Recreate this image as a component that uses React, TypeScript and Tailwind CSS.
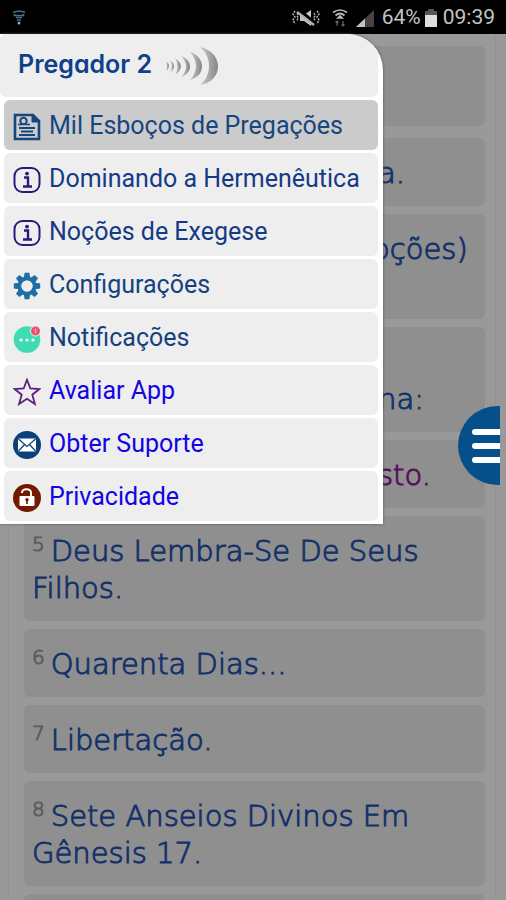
import React from "react";

const titleFont = "font-['Inter','Liberation_Sans',sans-serif]";
const menuFont = "font-['Roboto','Liberation_Sans',sans-serif]";
const iconBox = "mt-0.5 size-7 shrink-0";

function DocIcon() {
  return (
    <svg viewBox="0 0 28 28" className={iconBox} fill="none" stroke="#15467c" aria-hidden="true">
      <path d="M2 2h18l6 6v18H2z" strokeWidth="2.6" />
      <path d="M19 1v8h8z" fill="#15467c" strokeWidth="1" />
      <circle cx="10.500" cy="8" r="3.200" strokeWidth="2" />
      <path d="M5 11.500h4M12 11.500h5" strokeWidth="1.500" />
      <path d="M6 15h16M8 18.500h12M6 22h16" strokeWidth="1.800" />
    </svg>
  );
}

function InfoIcon() {
  return (
    <svg viewBox="0 0 28 28" className={iconBox} fill="none" stroke="#2a1a7e" aria-hidden="true">
      <rect x="1.500" y="2" width="25" height="24" rx="8" strokeWidth="2" />
      <path d="M11 11.500h4v9M10 20.500h9" strokeWidth="2.400" />
      <circle cx="14" cy="7.600" r="1.900" fill="#2a1a7e" stroke="none" />
    </svg>
  );
}

function GearIcon() {
  return (
    <svg viewBox="0 0 28 28" className={iconBox} aria-hidden="true">
      <g fill="#1d6fa5">
        {[0, 45, 90, 135].map((a) => (
          <path key={a} d="M11.600 .800h4.800l.8 5h-6.400zM11.600 27.200h4.800l.8-5h-6.400z" transform={`rotate(${a} 14 14)`} />
        ))}
      </g>
      <circle cx="14" cy="14" r="7.500" fill="none" stroke="#1d6fa5" strokeWidth="4" />
      <circle cx="14" cy="14" r="5.600" fill="#eee" />
    </svg>
  );
}

function ChatIcon() {
  return (
    <svg viewBox="0 0 28 28" className={iconBox} aria-hidden="true">
      <circle cx="14" cy="14.500" r="13.300" fill="#3fdcb4" />
      <g fill="#fff">
        <circle cx="8" cy="15" r="1.600" />
        <circle cx="14" cy="15" r="1.600" />
        <circle cx="20" cy="15" r="1.600" />
      </g>
      <circle cx="22.500" cy="6" r="5" fill="#ee4f6c" stroke="#eee" strokeWidth="1" />
      <path d="M21.500 5l1.200-1v4.500" fill="none" stroke="#fbb" strokeWidth="1" />
    </svg>
  );
}

function StarIcon() {
  return (
    <svg viewBox="0 0 28 28" className={iconBox} fill="none" stroke="#5b1f80" strokeWidth="1.800" aria-hidden="true">
      <path d="M14 1.800l3.300 8.700 9.200.500-7.200 5.700 2.600 9.300L14 20.800 6.100 26l2.600-9.300L1.500 11l9.200-.500z" />
    </svg>
  );
}

function MailIcon() {
  return (
    <svg viewBox="0 0 28 28" className={iconBox} aria-hidden="true">
      <circle cx="14" cy="14" r="14" fill="#0b4079" />
      <rect x="5" y="7.500" width="18" height="13" rx="1" fill="#fff" />
      <path d="M5.500 8l8.500 7.500L22.500 8M5.500 20l6-6.500M22.500 20l-6-6.500" fill="none" stroke="#0b4079" strokeWidth="1.200" />
    </svg>
  );
}

function LockIcon() {
  return (
    <svg viewBox="0 0 28 28" className={iconBox} aria-hidden="true">
      <circle cx="14" cy="14" r="14" fill="#741800" />
      <rect x="6.500" y="12" width="15" height="10" rx="1" fill="#fff" />
      <path d="M9 9V8.500a4.500 3.300 0 0 1 9 0V12" fill="none" stroke="#fff" strokeWidth="2" />
      <circle cx="14" cy="15.800" r="1.700" fill="#741800" />
      <path d="M14 16v4" stroke="#741800" strokeWidth="1.600" />
    </svg>
  );
}

const menu = [
  { label: "Mil Esboços de Pregações", icon: <DocIcon />, style: "bg-[#cbcbcb] text-[#15467f]" },
  { label: "Dominando a Hermenêutica", icon: <InfoIcon />, style: "bg-[#eee] text-[#153a86]" },
  { label: "Noções de Exegese", icon: <InfoIcon />, style: "bg-[#eee] text-[#153a86]" },
  { label: "Configurações", icon: <GearIcon />, style: "bg-[#eee] text-[#15417f]" },
  { label: "Notificações", icon: <ChatIcon />, style: "bg-[#eee] text-[#15417f]" },
  { label: "Avaliar App", icon: <StarIcon />, style: "bg-[#eee] text-[#1204e4]" },
  { label: "Obter Suporte", icon: <MailIcon />, style: "bg-[#eee] text-[#1204e4]" },
  { label: "Privacidade", icon: <LockIcon />, style: "bg-[#eee] text-[#1204e4]" },
];

function StatusBar() {
  return (
    <header className={`flex h-[34px] items-center bg-black pt-0.5 pr-[11px] pl-3 text-[21px] text-[#c4c4c4] ${menuFont}`}>
      <svg viewBox="0 0 14 16" className="h-4 w-3.5" fill="none" stroke="#44708e" strokeWidth="1.600" aria-hidden="true">
        <path d="M1 2.500q6-2.500 12 0M2.500 4v1.500h9V4M4 7.500h6M5 10h4" />
        <circle cx="7" cy="13" r="1.500" fill="#6fb4e0" stroke="none" />
      </svg>
      <div className="ml-auto flex items-center gap-1">
        <svg viewBox="0 0 28 18" className="mr-2 h-[18px] w-7" fill="none" stroke="#b0b0b0" strokeWidth="1.500" aria-hidden="true">
          <path strokeDasharray="2 1" d="M3 2L1 5l2 3-2 3 2 4M6 4L5 6l1 3-1 3M25 2l2 3-2 3 2 3-2 4M22 4l1 2-1 3 1 3" />
          <path d="M8 6h4l7-5v16l-7-5H8z" fill="#c4c4c4" stroke="none" />
          <path d="M6 0l17 14" stroke="#000" strokeWidth="3" />
          <path d="M5 3l17 13" strokeWidth="2.500" />
        </svg>
        <svg viewBox="0 0 16 18" className="mr-1 h-[18px] w-4" fill="none" stroke="#b8b8b8" strokeWidth="1.700" aria-hidden="true">
          <path d="M1 3.500q7-5 14 0M3.500 6.500q4.500-4 9 0M6 9l2-2 2 2z" />
          <path d="M5 12v5M3.500 13.500L5 12l1.500 1.500M11 12v5M9.500 15.500L11 17l1.500-1.500" stroke="#666" strokeWidth="1.200" />
        </svg>
        <svg viewBox="0 0 18 18" className="mr-1 h-[18px] w-[18px]" aria-hidden="true">
          <path d="M0 18L18 1v17z" fill="#444" />
          <path d="M0 18l9-8.500V18z" fill="#c4c4c4" />
        </svg>
        <span>64%</span>
        <svg viewBox="0 0 12 18" className="mr-0.5 h-[18px] w-3" aria-hidden="true">
          <path d="M3 0h6v2h3v4H0V2h3z" fill="#555" />
          <path d="M0 6h12v12H0z" fill="#dedede" />
        </svg>
        <time>09:39</time>
      </div>
    </header>
  );
}

function Waves() {
  return (
    <svg viewBox="0 0 56 38" className="h-[38px] w-14" aria-hidden="true">
      <defs>
        <linearGradient id="wave" x1="0" x2="1">
          <stop offset="0" stopColor="#cdcdcd" />
          <stop offset="1" stopColor="#858585" />
        </linearGradient>
      </defs>
      <g fill="url(#wave)">
        <path d="M2 14q6 5 0 10q2-5 0-10z" />
        <path d="M6 13q8 6 0 13q4-7 0-13z" />
        <path d="M11 11q12 8 0 17q5-8 0-17z" />
        <path d="M17 9c12 4 12 17 0 21c7-7 7-14 0-21z" />
        <path d="M26 5c16 5 16 24 0 28c8-9 8-19 0-28z" />
        <path d="M36 0c24 5 24 34 0 38c12-10 12-28 0-38z" />
      </g>
    </svg>
  );
}

function Drawer() {
  return (
    <nav
      aria-label="Menu"
      className="absolute top-0 left-0 flex w-[383px] flex-col gap-[3px] overflow-hidden rounded-tr-[36px] bg-white pr-[5px] pb-[3px] shadow-[0_0_3px_#555]"
    >
      <div className="flex h-[63px] items-center gap-3 rounded-md bg-[#eee] pl-[18px]">
        <h1 className={`pb-1 text-[25px] leading-8 font-semibold text-[#0f408a] [font-feature-settings:'cv11'] ${titleFont}`}>
          Pregador 2
        </h1>
        <Waves />
      </div>
      {menu.map((m) => (
        <a
          key={m.label}
          href="#"
          className={`ml-1 flex h-[50px] items-center gap-2 rounded-md pt-0.5 pl-[9px] text-[25px] leading-8 ${menuFont} ${m.style}`}
        >
          {m.icon}
          {m.label}
        </a>
      ))}
    </nav>
  );
}

function Card({ n, className = "", children }: { n?: number; className?: string; children?: React.ReactNode }) {
  return (
    <li className={`rounded-md bg-[#8f8f8f] pt-[17px] pb-3.5 ${className}`}>
      {n && <sup className="mr-1.5 text-xl leading-none text-[#5c5c5c]">{n}</sup>}
      {children}
    </li>
  );
}

export default function App() {
  return (
    <div className="h-screen overflow-hidden bg-[#999]">
      <StatusBar />
      <div className="relative">
        <main className="mr-2.5 ml-2 border-x border-[#929292] pt-3 pr-[10px] pl-[15px]">
          <div className="mb-3 h-20 rounded-md bg-[#8f8f8f]" />
          <ul className="flex flex-col gap-2 text-[29px] leading-[37px] font-light text-[#14326a] font-['DejaVu_Sans','Roboto',sans-serif] [-webkit-text-stroke:1px]">
            <Card className="pl-[354px]">a.</Card>
            <Card className="h-[105px] pl-[348px]">oções)</Card>
            <Card className="flex h-[105px] items-end pl-[354px]">na:</Card>
            <Card className="pl-[354px] text-[#54105c]">sto.</Card>
            <Card n={5} className="px-2">Deus Lembra-Se De Seus Filhos.</Card>
            <Card n={6} className="px-2">Quarenta Dias...</Card>
            <Card n={7} className="px-2">Libertação.</Card>
            <Card n={8} className="px-2">Sete Anseios Divinos Em Gênesis 17.</Card>
            <Card className="h-10" />
          </ul>
        </main>
        <Drawer />
        <button
          type="button"
          aria-label="Abrir menu"
          className="absolute top-[372px] right-1.5 flex h-[79px] w-[42px] flex-col items-end justify-center gap-2 rounded-l-full bg-[#05508a]"
        >
          <span className="h-1.5 w-7 rounded-l-full bg-white" />
          <span className="h-1.5 w-7 rounded-l-full bg-white" />
          <span className="h-1.5 w-7 rounded-l-full bg-white" />
        </button>
      </div>
    </div>
  );
}
